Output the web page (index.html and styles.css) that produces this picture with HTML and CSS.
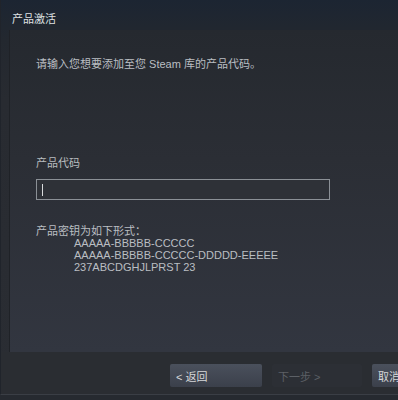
FILE: index.html
```html
<!DOCTYPE html>
<html lang="zh-CN">
<head>
  <meta charset="UTF-8" />
  <title>产品激活</title>
  <link rel="stylesheet" href="styles.css">
</head>
<body>
  <div class="dialog">
    <div class="title">产品激活</div>

    <div class="panel">
      <p class="intro">请输入您想要添加至您 Steam 库的产品代码。</p>

      <label class="field-label" for="code">产品代码</label>
      <div class="input-box"><span class="caret"></span></div>

      <div class="formats">
        <div class="formats-title">产品密钥为如下形式：</div>
        <div class="format-list">
          <div>AAAAA-BBBBB-CCCCC</div>
          <div>AAAAA-BBBBB-CCCCC-DDDDD-EEEEE</div>
          <div>237ABCDGHJLPRST 23</div>
        </div>
      </div>
    </div>

    <div class="footer">
      <button class="btn">&lt; 返回</button>
      <button class="btn disabled">下一步 &gt;</button>
      <button class="btn">取消</button>
    </div>
  </div>
</body>
</html>
```

FILE: styles.css
```css
html, body {
  margin: 0;
  padding: 0;
  height: 100%;
  overflow: hidden;
}

body {
  background: #262a30;
  font-family: "Liberation Sans", "Noto Sans CJK SC", sans-serif;
  font-size: 11px;
  color: #b8bcbf;
}

.dialog {
  height: 395px;
  display: flex;
  flex-direction: column;
  background: linear-gradient(to bottom, #1c2532 0px, #23282f 40px, #282b31 100px, #2a2d33 400px);
  border-left: 1px solid #20242b;
  border-bottom: 1px solid #3a3e45;
  box-sizing: border-box;
}

.title {
  height: 30px;
  padding: 10px 0 0 11px;
  box-sizing: border-box;
  color: #dfe1e3;
  font-size: 11px;
}

.panel {
  flex: 1;
  margin-left: 8px;
  padding: 26px 0 0 26px;
  background: linear-gradient(to bottom, #25292f 0%, #2b2e35 40%, #323640 100%);
  border-left: 1px solid #1f2227;
}

.intro {
  margin: 0 0 83px;
  line-height: 16px;
  color: #babec2;
}

.field-label {
  display: block;
  line-height: 16px;
  color: #b8bcbf;
  margin-bottom: 8px;
}

.input-box {
  width: 292px;
  height: 19px;
  border: 1px solid #8b9096;
  background: #2e3137;
  position: relative;
}

.caret {
  position: absolute;
  left: 5px;
  top: 4px;
  width: 1px;
  height: 12px;
  background: #d8dadc;
}

.formats {
  margin-top: 25px;
  line-height: 12px;
  color: #babec2;
}

.format-list {
  padding-left: 38px;
}

.footer {
  height: 42px;
  display: flex;
  align-items: flex-start;
  gap: 10px;
  padding: 12px 0 0 169px;
  box-sizing: border-box;
  background: #2a2d32;
}

.btn {
  flex: none;
  width: 92px;
  height: 23px;
  border: none;
  border-radius: 2px;
  padding: 0 0 0 6px;
  text-align: left;
  font-family: inherit;
  font-size: 11px;
  color: #d6d8da;
  background: linear-gradient(to bottom, #4a505c, #3b404b);
}

.btn.disabled {
  width: 90px;
  background: #2c2f35;
  color: #5c6066;
}
```
